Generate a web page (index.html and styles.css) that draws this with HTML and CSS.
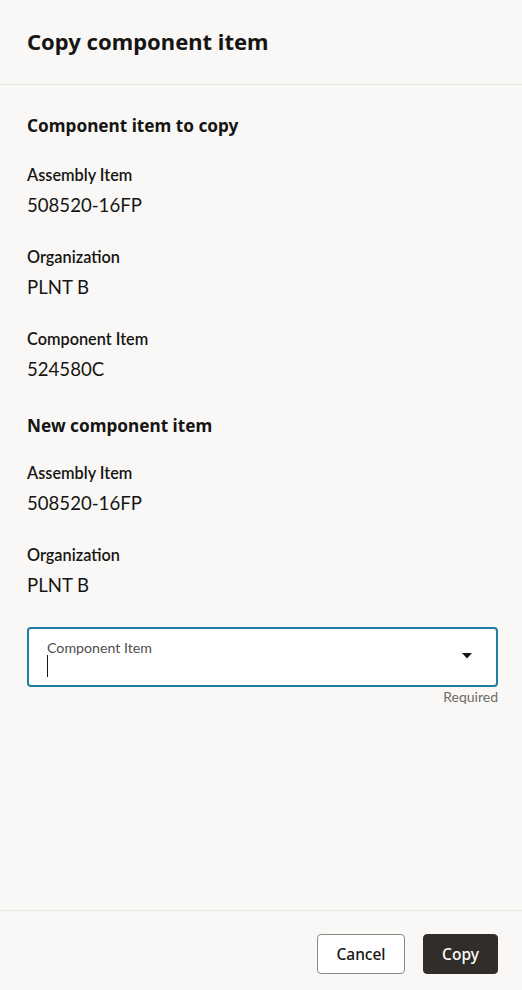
FILE: index.html
```html
<!DOCTYPE html>
<html>
<head>
<meta charset="utf-8">
<link rel="stylesheet" href="styles.css">
</head>
<body>
<div class="dialog">
  <header class="header">
    <h1 class="title">Copy component item</h1>
  </header>
  <main class="body">
    <h2 class="section">Component item to copy</h2>
    <div class="field">
      <div class="label">Assembly Item</div>
      <div class="value">508520-16FP</div>
    </div>
    <div class="field">
      <div class="label">Organization</div>
      <div class="value">PLNT B</div>
    </div>
    <div class="field">
      <div class="label">Component Item</div>
      <div class="value">524580C</div>
    </div>
    <h2 class="section section-2">New component item</h2>
    <div class="field">
      <div class="label">Assembly Item</div>
      <div class="value">508520-16FP</div>
    </div>
    <div class="field">
      <div class="label">Organization</div>
      <div class="value">PLNT B</div>
    </div>
    <div class="input-wrap">
      <div class="input">
        <div class="input-text">
          <div class="input-label">Component Item</div>
          <div class="caret-line"></div>
        </div>
        <svg class="dd" width="10" height="6" viewBox="0 0 10 6"><path d="M0 0H10L5 5.5Z" fill="#161513"/></svg>
      </div>
      <div class="required">Required</div>
    </div>
  </main>
  <footer class="footer">
    <button class="btn btn-outline">Cancel</button>
    <button class="btn btn-solid">Copy</button>
  </footer>
</div>
</body>
</html>
```
FILE: styles.css
```css
html, body {
  margin: 0;
  padding: 0;
  background: #f9f8f6;
}
body {
  font-family: Lato, "Noto Sans", sans-serif;
  color: #161513;
}
.dialog {
  width: 522px;
  height: 990px;
  display: flex;
  flex-direction: column;
}
.header {
  height: 85px;
  border-bottom: 1px solid #e9e7e4;
  padding: 0 27px 2px;
  display: flex;
  align-items: center;
  box-sizing: border-box;
}
.title {
  margin: 0;
  font-family: "Noto Sans", sans-serif;
  font-size: 22px;
  font-weight: 700;
  letter-spacing: 0;
}
.body {
  flex: 1;
  padding: 29px 24px 0 27px;
}
.section {
  margin: 0;
  font-family: "Noto Sans", sans-serif;
  font-size: 17.2px;
  font-weight: 700;
  line-height: 24px;
  margin-bottom: 27px;
}
.section-2 {
  margin-top: 33px;
  margin-bottom: 25px;
}
.field {
  margin-bottom: 30px;
}
.label {
  font-size: 16.3px;
  font-weight: 600;
  line-height: 20px;
}
.value {
  font-size: 18.6px;
  line-height: 24px;
  margin-top: 8px;
}
.input-wrap {
  margin-top: 0;
}
.input {
  height: 60px;
  box-sizing: border-box;
  border: 2px solid #227e9e;
  border-radius: 4px;
  background: #fff;
  display: flex;
  align-items: center;
  padding: 0 24px 0 18px;
}
.input-text {
  flex: 1;
  align-self: flex-start;
  padding-top: 10px;
}
.input-label {
  font-size: 14.2px;
  line-height: 17px;
  color: #4f4c49;
}
.caret-line {
  width: 1px;
  height: 22px;
  background: #161513;
  margin-top: -1px;
}
.dd {
  display: block;
  margin-bottom: 2px;
}
.required {
  text-align: right;
  font-size: 14px;
  line-height: 17px;
  color: #6f6b67;
  margin-top: 1px;
}
.footer {
  height: 80px;
  border-top: 1px solid #e9e7e4;
  display: flex;
  justify-content: flex-end;
  align-items: flex-start;
  gap: 18px;
  padding: 23px 24px 0 0;
  box-sizing: border-box;
}
.btn {
  height: 40px;
  border-radius: 4px;
  font-family: "Noto Sans", sans-serif;
  font-size: 15.5px;
  font-weight: 500;
  padding: 0;
  cursor: pointer;
}
.btn-outline {
  width: 88px;
  background: #fff;
  border: 1px solid #8c8985;
  color: #161513;
}
.btn-solid {
  width: 75px;
  background: #312d2a;
  border: 1px solid #312d2a;
  color: #fff;
}
```
